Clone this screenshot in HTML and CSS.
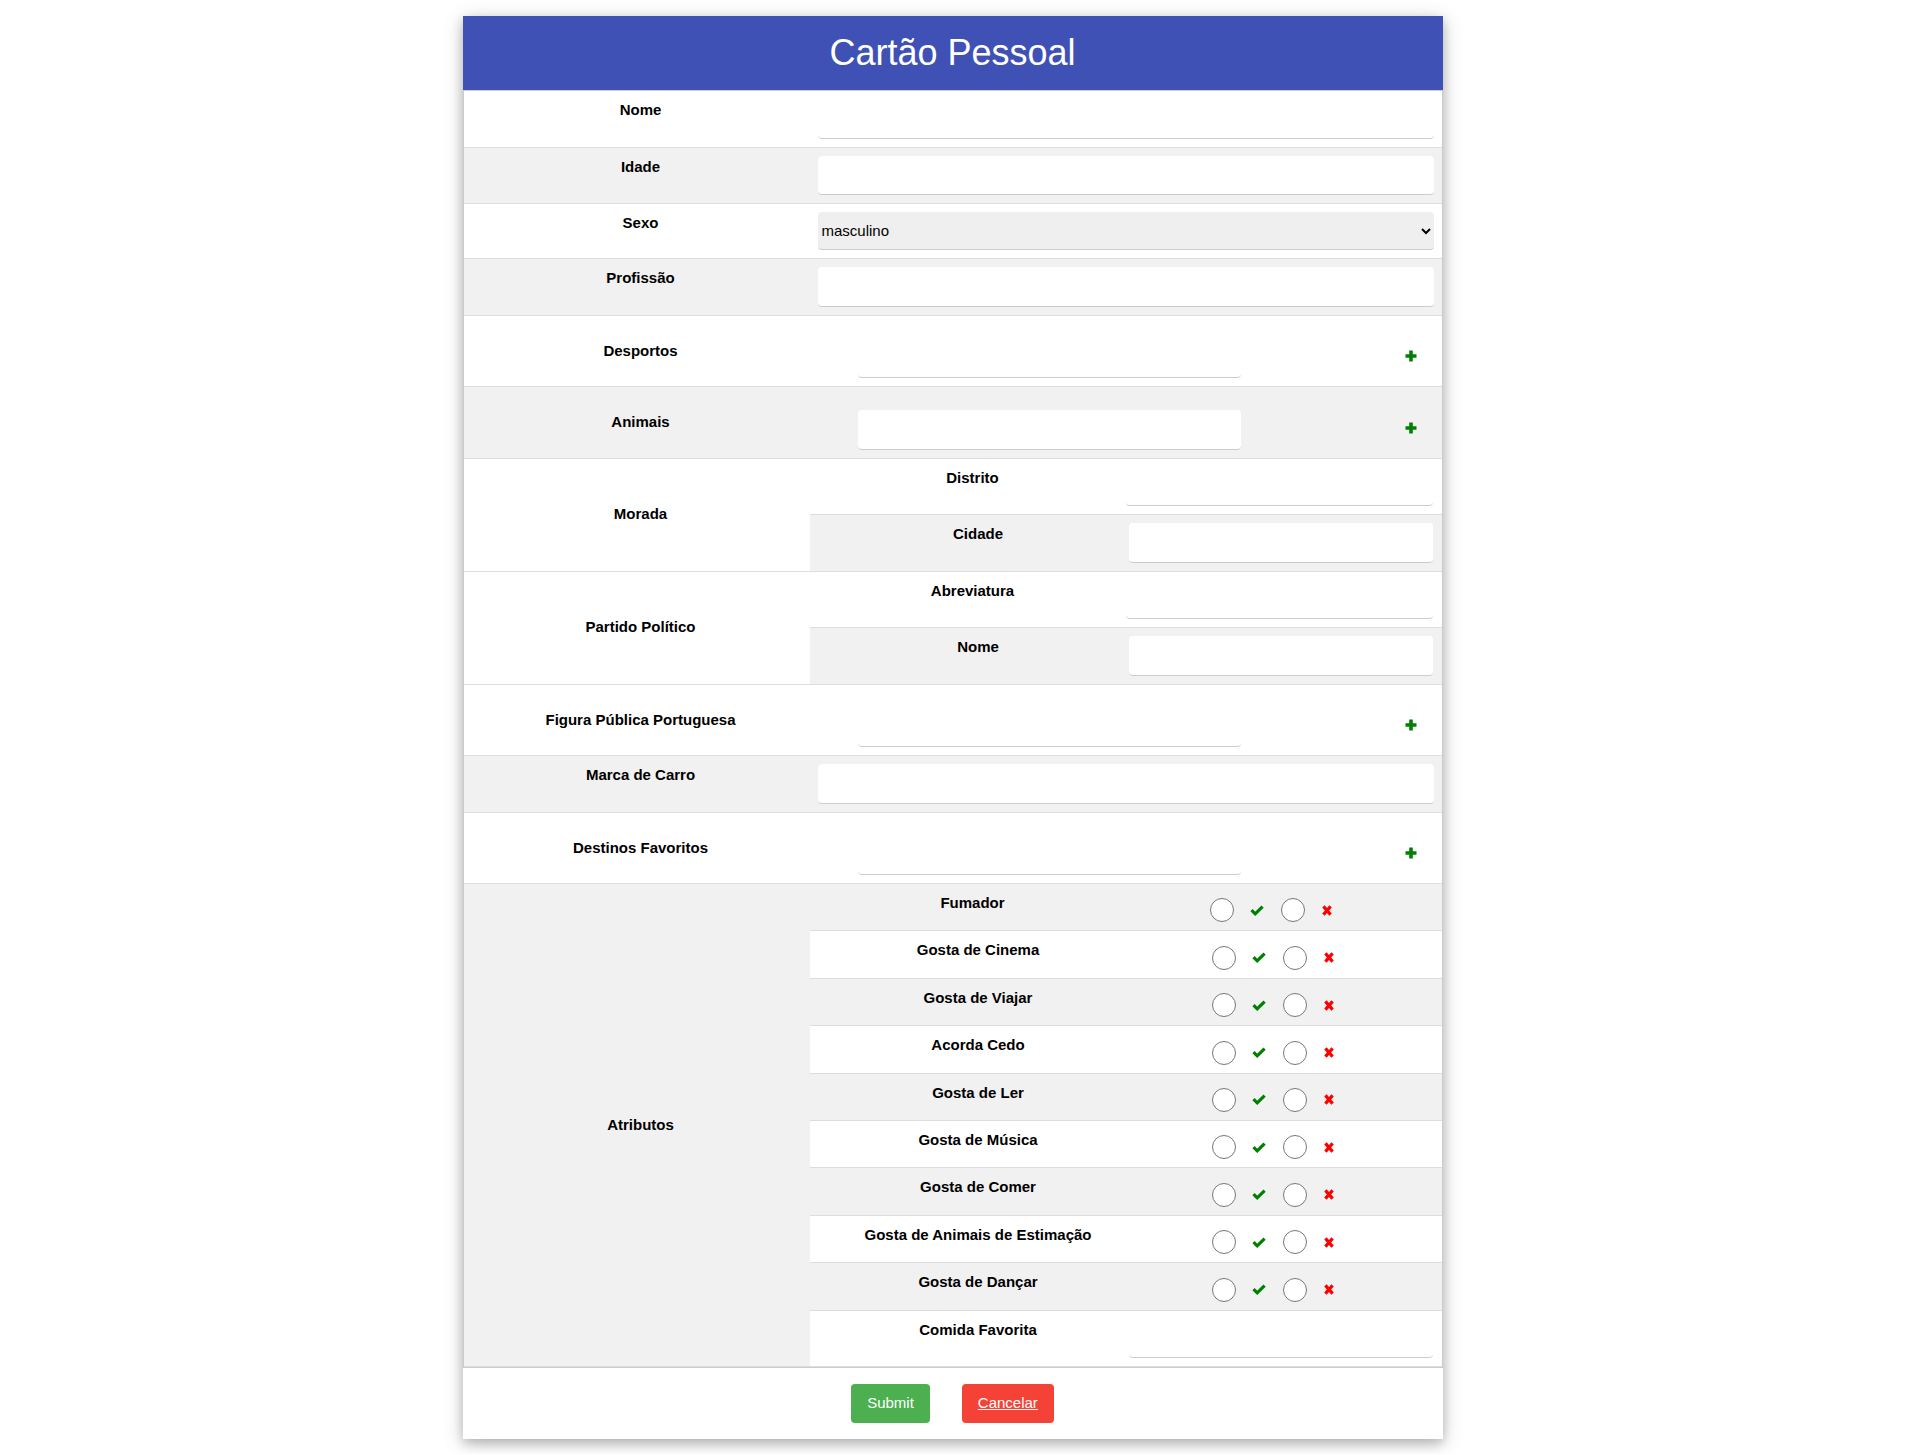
FILE: index.html
```html
<!DOCTYPE html>
<html lang="pt">
<head>
<meta charset="utf-8">
<title>Cartão Pessoal</title>
<link rel="stylesheet" href="styles.css">
</head>
<body>
<div class="card">
  <header class="card-header"><h1>Cartão Pessoal</h1></header>
  <form class="form">
    <div class="row white">
      <div class="label">Nome</div>
      <div class="field"><input class="inp" type="text"></div>
    </div>
    <div class="row grey">
      <div class="label">Idade</div>
      <div class="field"><input class="inp" type="text"></div>
    </div>
    <div class="row white">
      <div class="label">Sexo</div>
      <div class="field"><select class="sel"><option>masculino</option><option>feminino</option></select></div>
    </div>
    <div class="row grey">
      <div class="label">Profissão</div>
      <div class="field"><input class="inp" type="text"></div>
    </div>
    <div class="row white">
      <div class="label mid">Desportos</div>
      <div class="field">
        <div class="multi"><input class="inp" type="text"><span class="plus"><svg viewBox="0 0 12 12" width="12" height="12"><path d="M6 0.5V11.5M0.5 6H11.5" stroke="#008000" stroke-width="3.6" fill="none"/></svg></span></div>
      </div>
    </div>
    <div class="row grey">
      <div class="label mid">Animais</div>
      <div class="field">
        <div class="multi"><input class="inp" type="text"><span class="plus"><svg viewBox="0 0 12 12" width="12" height="12"><path d="M6 0.5V11.5M0.5 6H11.5" stroke="#008000" stroke-width="3.6" fill="none"/></svg></span></div>
      </div>
    </div>
    <div class="row white">
      <div class="label mid">Morada</div>
      <div class="sub">
        <div class="subrow white first">
          <div class="sublabel">Distrito</div>
          <div class="subfield"><input class="inp" type="text"></div>
        </div>
        <div class="subrow grey">
          <div class="sublabel">Cidade</div>
          <div class="subfield"><input class="inp" type="text"></div>
        </div>
      </div>
    </div>
    <div class="row white">
      <div class="label mid">Partido Político</div>
      <div class="sub">
        <div class="subrow white first">
          <div class="sublabel">Abreviatura</div>
          <div class="subfield"><input class="inp" type="text"></div>
        </div>
        <div class="subrow grey">
          <div class="sublabel">Nome</div>
          <div class="subfield"><input class="inp" type="text"></div>
        </div>
      </div>
    </div>
    <div class="row white">
      <div class="label mid">Figura Pública Portuguesa</div>
      <div class="field">
        <div class="multi"><input class="inp" type="text"><span class="plus"><svg viewBox="0 0 12 12" width="12" height="12"><path d="M6 0.5V11.5M0.5 6H11.5" stroke="#008000" stroke-width="3.6" fill="none"/></svg></span></div>
      </div>
    </div>
    <div class="row grey">
      <div class="label">Marca de Carro</div>
      <div class="field"><input class="inp" type="text"></div>
    </div>
    <div class="row white">
      <div class="label mid">Destinos Favoritos</div>
      <div class="field">
        <div class="multi"><input class="inp" type="text"><span class="plus"><svg viewBox="0 0 12 12" width="12" height="12"><path d="M6 0.5V11.5M0.5 6H11.5" stroke="#008000" stroke-width="3.6" fill="none"/></svg></span></div>
      </div>
    </div>
    <div class="row grey">
      <div class="label mid">Atributos</div>
      <div class="sub">
        <div class="subrow grey first">
          <div class="sublabel">Fumador</div>
          <div class="subfield"><div class="yn"><input type="radio" class="radio" name="a1"><svg class="ok" viewBox="0 0 14 11" width="14" height="11"><path d="M1.5 5.2L5.2 8.8L12.6 1.6" stroke="#008000" stroke-width="3.2" fill="none"/></svg><input type="radio" class="radio r2" name="a1"><svg class="no" viewBox="0 0 10 11" width="10" height="11"><path d="M1.4 1.4L8.6 9.6M8.6 1.4L1.4 9.6" stroke="#ff0000" stroke-width="3.2" fill="none"/></svg></div></div>
        </div>
        <div class="subrow white">
          <div class="sublabel">Gosta de Cinema</div>
          <div class="subfield"><div class="yn"><input type="radio" class="radio" name="a2"><svg class="ok" viewBox="0 0 14 11" width="14" height="11"><path d="M1.5 5.2L5.2 8.8L12.6 1.6" stroke="#008000" stroke-width="3.2" fill="none"/></svg><input type="radio" class="radio r2" name="a2"><svg class="no" viewBox="0 0 10 11" width="10" height="11"><path d="M1.4 1.4L8.6 9.6M8.6 1.4L1.4 9.6" stroke="#ff0000" stroke-width="3.2" fill="none"/></svg></div></div>
        </div>
        <div class="subrow grey">
          <div class="sublabel">Gosta de Viajar</div>
          <div class="subfield"><div class="yn"><input type="radio" class="radio" name="a3"><svg class="ok" viewBox="0 0 14 11" width="14" height="11"><path d="M1.5 5.2L5.2 8.8L12.6 1.6" stroke="#008000" stroke-width="3.2" fill="none"/></svg><input type="radio" class="radio r2" name="a3"><svg class="no" viewBox="0 0 10 11" width="10" height="11"><path d="M1.4 1.4L8.6 9.6M8.6 1.4L1.4 9.6" stroke="#ff0000" stroke-width="3.2" fill="none"/></svg></div></div>
        </div>
        <div class="subrow white">
          <div class="sublabel">Acorda Cedo</div>
          <div class="subfield"><div class="yn"><input type="radio" class="radio" name="a4"><svg class="ok" viewBox="0 0 14 11" width="14" height="11"><path d="M1.5 5.2L5.2 8.8L12.6 1.6" stroke="#008000" stroke-width="3.2" fill="none"/></svg><input type="radio" class="radio r2" name="a4"><svg class="no" viewBox="0 0 10 11" width="10" height="11"><path d="M1.4 1.4L8.6 9.6M8.6 1.4L1.4 9.6" stroke="#ff0000" stroke-width="3.2" fill="none"/></svg></div></div>
        </div>
        <div class="subrow grey">
          <div class="sublabel">Gosta de Ler</div>
          <div class="subfield"><div class="yn"><input type="radio" class="radio" name="a5"><svg class="ok" viewBox="0 0 14 11" width="14" height="11"><path d="M1.5 5.2L5.2 8.8L12.6 1.6" stroke="#008000" stroke-width="3.2" fill="none"/></svg><input type="radio" class="radio r2" name="a5"><svg class="no" viewBox="0 0 10 11" width="10" height="11"><path d="M1.4 1.4L8.6 9.6M8.6 1.4L1.4 9.6" stroke="#ff0000" stroke-width="3.2" fill="none"/></svg></div></div>
        </div>
        <div class="subrow white">
          <div class="sublabel">Gosta de Música</div>
          <div class="subfield"><div class="yn"><input type="radio" class="radio" name="a6"><svg class="ok" viewBox="0 0 14 11" width="14" height="11"><path d="M1.5 5.2L5.2 8.8L12.6 1.6" stroke="#008000" stroke-width="3.2" fill="none"/></svg><input type="radio" class="radio r2" name="a6"><svg class="no" viewBox="0 0 10 11" width="10" height="11"><path d="M1.4 1.4L8.6 9.6M8.6 1.4L1.4 9.6" stroke="#ff0000" stroke-width="3.2" fill="none"/></svg></div></div>
        </div>
        <div class="subrow grey">
          <div class="sublabel">Gosta de Comer</div>
          <div class="subfield"><div class="yn"><input type="radio" class="radio" name="a7"><svg class="ok" viewBox="0 0 14 11" width="14" height="11"><path d="M1.5 5.2L5.2 8.8L12.6 1.6" stroke="#008000" stroke-width="3.2" fill="none"/></svg><input type="radio" class="radio r2" name="a7"><svg class="no" viewBox="0 0 10 11" width="10" height="11"><path d="M1.4 1.4L8.6 9.6M8.6 1.4L1.4 9.6" stroke="#ff0000" stroke-width="3.2" fill="none"/></svg></div></div>
        </div>
        <div class="subrow white">
          <div class="sublabel">Gosta de Animais de Estimação</div>
          <div class="subfield"><div class="yn"><input type="radio" class="radio" name="a8"><svg class="ok" viewBox="0 0 14 11" width="14" height="11"><path d="M1.5 5.2L5.2 8.8L12.6 1.6" stroke="#008000" stroke-width="3.2" fill="none"/></svg><input type="radio" class="radio r2" name="a8"><svg class="no" viewBox="0 0 10 11" width="10" height="11"><path d="M1.4 1.4L8.6 9.6M8.6 1.4L1.4 9.6" stroke="#ff0000" stroke-width="3.2" fill="none"/></svg></div></div>
        </div>
        <div class="subrow grey">
          <div class="sublabel">Gosta de Dançar</div>
          <div class="subfield"><div class="yn"><input type="radio" class="radio" name="a9"><svg class="ok" viewBox="0 0 14 11" width="14" height="11"><path d="M1.5 5.2L5.2 8.8L12.6 1.6" stroke="#008000" stroke-width="3.2" fill="none"/></svg><input type="radio" class="radio r2" name="a9"><svg class="no" viewBox="0 0 10 11" width="10" height="11"><path d="M1.4 1.4L8.6 9.6M8.6 1.4L1.4 9.6" stroke="#ff0000" stroke-width="3.2" fill="none"/></svg></div></div>
        </div>
        <div class="subrow white">
          <div class="sublabel">Comida Favorita</div>
          <div class="subfield"><input class="inp" type="text"></div>
        </div>
      </div>
    </div>
  </form>
  <div class="actions">
    <button type="button" class="btn btn-green">Submit</button>
    <a href="#" class="btn btn-red">Cancelar</a>
  </div>
</div>
</body>
</html>
```
FILE: styles.css
```css
html, body {
  margin: 0;
  padding: 0;
  background: #fff;
}
body {
  font-family: "Liberation Sans", Arial, sans-serif;
  font-size: 15px;
  line-height: 1.5;
  color: #000;
}
*, *::before, *::after {
  box-sizing: border-box;
}
.card {
  width: 980px;
  margin: 16px auto 15px;
  background: #fff;
  box-shadow: 0 4px 10px 0 rgba(0,0,0,0.2), 0 4px 20px 0 rgba(0,0,0,0.19);
}
.card-header {
  background: #3f51b5;
  color: #fff;
  padding: 0 16px;
  text-align: center;
}
.card-header h1 {
  margin: 0;
  padding: 10px 0;
  font-size: 36px;
  font-weight: normal;
  line-height: 54px;
}
.form {
  margin: 0;
  border: 1px solid #ccc;
}
.row {
  display: grid;
  grid-template-columns: 346px 1fr;
  border-bottom: 1px solid #ddd;
}
.white { background: #fff; }
.grey { background: #f1f1f1; }
.label {
  padding: 8px 8px 8px 16px;
  text-align: center;
  font-weight: bold;
  align-self: start;
}
.label.mid {
  align-self: center;
}
.field {
  padding: 8px 8px 8px 8px;
}
.inp {
  display: block;
  width: 100%;
  height: 39.5px;
  padding: 8px;
  border: none;
  border-bottom: 1px solid #ccc;
  border-radius: 4px;
  background: #fff;
  font: 15px "Liberation Sans", Arial, sans-serif;
  color: #000;
  outline: none;
}
.sel {
  display: block;
  width: 100%;
  height: 38px;
  padding: 0;
  border: none;
  border-bottom: 1px solid #ccc;
  border-radius: 4px;
  background-color: #efefef;
  font: 15px "Liberation Sans", Arial, sans-serif;
  color: #000;
}
.multi {
  display: grid;
  grid-template-columns: 383px 1fr;
  align-items: center;
  padding: 15px 0 0 40px;
}
.plus {
  justify-self: end;
  margin: 0 17px 4px 0;
  display: flex;
}
.sub {
  display: flex;
  flex-direction: column;
}
.subrow {
  display: grid;
  grid-template-columns: 310px 1fr;
  border-bottom: 1px solid #ddd;
}
.subrow:last-child {
  border-bottom: none;
}
.subrow.first {
  grid-template-columns: 307px 1fr;
}
.sublabel {
  padding: 8px 0 8px 27px;
  text-align: center;
  font-weight: bold;
}
.subrow.first .sublabel {
  padding-left: 19px;
}
.subfield {
  padding: 8px 9px 8px 9px;
}
.yn {
  display: flex;
  align-items: center;
  height: 24px;
  margin: 6.4px 0 0 83px;
}
.subrow.first .yn {
  margin-left: 84px;
}
.radio {
  width: 24px;
  height: 24px;
  margin: 0;
  flex: none;
}
.ok {
  margin-left: 16px;
  flex: none;
}
.r2 {
  margin-left: 17px;
}
.no {
  margin-left: 17px;
  flex: none;
}
.actions {
  display: flex;
  justify-content: center;
  gap: 32px;
  padding: 16px 0;
}
.btn {
  display: inline-block;
  padding: 8px 16px;
  border: none;
  border-radius: 4px;
  font: 15px/1.5 "Liberation Sans", Arial, sans-serif;
  color: #fff;
  cursor: pointer;
}
.btn-green {
  background: #4caf50;
  text-decoration: none;
}
.btn-red {
  background: #f44336;
  text-decoration: underline;
}
```
